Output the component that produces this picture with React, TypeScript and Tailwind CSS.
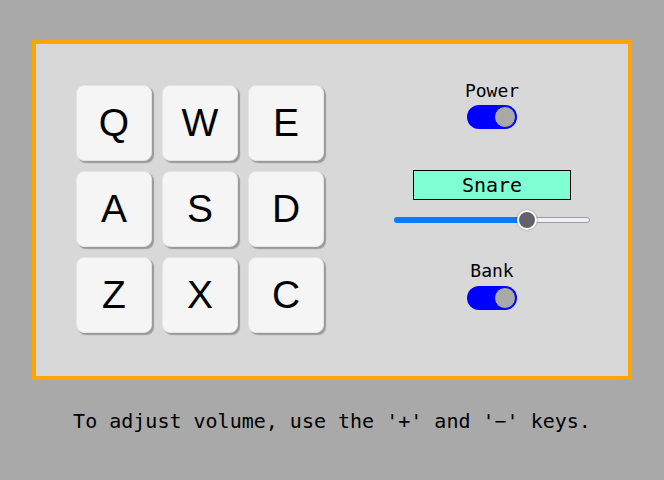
const keys = ["Q", "W", "E", "A", "S", "D", "Z", "X", "C"];

const mono = "font-['DejaVu_Sans_Mono',monospace]";

const Toggle = () => (
  <div className="w-[50px] h-[24px] rounded-full bg-[#0000ff] flex items-center justify-end px-[1px]">
    <div className="w-[22px] h-[22px] rounded-full bg-[#a9a9a9] border border-[#0000ff]" />
  </div>
);

const Slider = ({ value }: { value: number }) => {
  const pos = 10 + value * 176;
  return (
    <div className="relative w-[196px] h-[20px] flex items-center">
      <div className="w-full h-[6px] rounded-full flex">
        <div className="h-full rounded-l-full bg-[#0a7aff]" style={{ width: pos }} />
        <div className="h-full flex-1 rounded-r-full bg-[#efeff4] border border-[#9a9aa2]" />
      </div>
      <div
        className="absolute top-0 w-[20px] h-[20px] rounded-full bg-[#62626c] border-2 border-white shadow-[0_0_2px_rgba(0,0,0,0.4)]"
        style={{ left: pos - 10 }}
      />
    </div>
  );
};

export default function App() {
  return (
    <div className="min-h-[480px] bg-[#a9a9a9] pt-[40px]">
      <div className="mx-auto w-[600px] h-[340px] border-4 border-[#ffa500] bg-[#d8d8d8] flex">
        <div className="ml-[40px] mt-[41px] grid grid-cols-3 gap-[10px] self-start">
          {keys.map((k) => (
            <div
              key={k}
              className="w-[76px] h-[76px] rounded-[8px] bg-[#f5f5f5] border border-[#e4e4e4] shadow-[2px_2px_1px_#9a9a9a] flex items-center justify-center text-[39px] font-['Liberation_Sans',Arial,sans-serif] text-black"
            >
              {k}
            </div>
          ))}
        </div>
        <div className={`ml-[70px] mt-[36px] w-[196px] flex flex-col items-center self-start ${mono}`}>
          <div className="text-[18px] leading-[21px] text-black">Power</div>
          <div className="mt-[4px]">
            <Toggle />
          </div>
          <div className="mt-[41px] w-[158px] h-[30px] border border-black bg-[#7fffd4] flex items-center justify-center text-[20px] text-black">
            Snare
          </div>
          <div className="mt-[10px]">
            <Slider value={0.7} />
          </div>
          <div className="mt-[30px] text-[18px] leading-[21px] text-black">Bank</div>
          <div className="mt-[5px]">
            <Toggle />
          </div>
        </div>
      </div>
      <p className={`mt-[30px] text-center text-[20px] leading-[23px] text-black ${mono}`}>
        To adjust volume, use the '+' and '−' keys.
      </p>
    </div>
  );
}
